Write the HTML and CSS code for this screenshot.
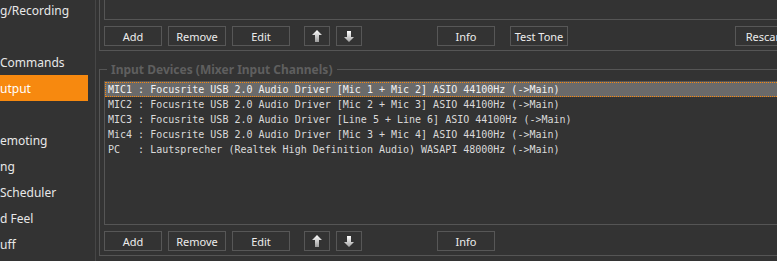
FILE: index.html
```html
<!DOCTYPE html>
<html>
<head>
  <meta charset="utf-8">
  <title>Options</title>
  <link rel="stylesheet" href="styles.css">
</head>
<body>
<div class="app">

  <!-- 왼쪽 메뉴 -->
  <div class="sidebar">
    <div class="nav">
      <div class="nav-item">g/Recording</div>
      <div class="nav-item"></div>
      <div class="nav-item">Commands</div>
      <div class="nav-item active">utput</div>
      <div class="nav-item"></div>
      <div class="nav-item">emoting</div>
      <div class="nav-item">ng</div>
      <div class="nav-item">Scheduler</div>
      <div class="nav-item">d Feel</div>
      <div class="nav-item">uff</div>
    </div>
  </div>

  <!-- 설정 패널 -->
  <div class="main">
    <div class="group group-top">
      <div class="listbox listbox-top"></div>
      <div class="btn-row">
        <div class="btn">Add</div>
        <div class="btn">Remove</div>
        <div class="btn">Edit</div>
        <div class="btn btn-arrow gap-up">
          <svg width="10" height="12" viewBox="0 0 10 12"><defs><linearGradient id="ga1" x1="0" y1="0" x2="0" y2="1"><stop offset="0" stop-color="#ffffff"/><stop offset="1" stop-color="#9c9c9c"/></linearGradient></defs><path d="M5 0 L10 5 L7 5 L7 12 L3 12 L3 5 L0 5 Z" fill="url(#ga1)"/></svg>
        </div>
        <div class="btn btn-arrow">
          <svg width="10" height="11" viewBox="0 0 10 11"><defs><linearGradient id="gb1" x1="0" y1="0" x2="0" y2="1"><stop offset="0" stop-color="#ffffff"/><stop offset="1" stop-color="#a4a4a4"/></linearGradient></defs><path d="M3 0 L7 0 L7 6 L10 6 L5 11 L0 6 L3 6 Z" fill="url(#gb1)"/></svg>
        </div>
        <div class="btn gap-info">Info</div>
        <div class="btn gap-tone">Test Tone</div>
        <div class="btn gap-rescan">Rescan</div>
      </div>
    </div>

    <div class="group-head"><span>Input Devices (Mixer Input Channels)</span></div>
    <div class="group group-input">
      <div class="listbox listbox-input">
        <div class="row selected">MIC1 : Focusrite USB 2.0 Audio Driver [Mic 1 + Mic 2] ASIO 44100Hz (-&gt;Main)</div>
        <div class="row">MIC2 : Focusrite USB 2.0 Audio Driver [Mic 2 + Mic 3] ASIO 44100Hz (-&gt;Main)</div>
        <div class="row">MIC3 : Focusrite USB 2.0 Audio Driver [Line 5 + Line 6] ASIO 44100Hz (-&gt;Main)</div>
        <div class="row">Mic4 : Focusrite USB 2.0 Audio Driver [Mic 3 + Mic 4] ASIO 44100Hz (-&gt;Main)</div>
        <div class="row">PC   : Lautsprecher (Realtek High Definition Audio) WASAPI 48000Hz (-&gt;Main)</div>
      </div>
      <div class="btn-row">
        <div class="btn">Add</div>
        <div class="btn">Remove</div>
        <div class="btn">Edit</div>
        <div class="btn btn-arrow gap-up">
          <svg width="10" height="12" viewBox="0 0 10 12"><defs><linearGradient id="ga2" x1="0" y1="0" x2="0" y2="1"><stop offset="0" stop-color="#ffffff"/><stop offset="1" stop-color="#9c9c9c"/></linearGradient></defs><path d="M5 0 L10 5 L7 5 L7 12 L3 12 L3 5 L0 5 Z" fill="url(#ga2)"/></svg>
        </div>
        <div class="btn btn-arrow">
          <svg width="10" height="11" viewBox="0 0 10 11"><defs><linearGradient id="gb2" x1="0" y1="0" x2="0" y2="1"><stop offset="0" stop-color="#ffffff"/><stop offset="1" stop-color="#a4a4a4"/></linearGradient></defs><path d="M3 0 L7 0 L7 6 L10 6 L5 11 L0 6 L3 6 Z" fill="url(#gb2)"/></svg>
        </div>
        <div class="btn gap-info">Info</div>
      </div>
    </div>
  </div>

</div>
</body>
</html>
```

FILE: styles.css
```css
/* 기본 */
body { margin: 0; background: #333333; overflow: hidden; font-family: "Noto Sans", "Liberation Sans", sans-serif; font-size: 11px; color: #e6e6e6; }
.app { display: flex; height: 261px; width: 1000px; }

/* 왼쪽 메뉴 */
.sidebar { flex: none; width: 95px; border-right: 1px solid #464646; overflow: hidden; }
.nav { margin-top: -3px; }
.nav-item { width: 88px; height: 26px; line-height: 28px; font-size: 12px; white-space: nowrap; overflow: hidden; color: #e8e8e8; }
.nav-item.active { background: #f7890f; color: #ffffff; }

/* 설정 패널 */
.main { flex: none; width: 860px; padding-left: 3px; }
.group { border-left: 1px solid #555555; border-bottom: 1px solid #555555; padding: 0 0 4px 4px; }
.group-input { padding-top: 4px; }

.group-head { display: flex; height: 15px; margin-top: 11px; }
.group-head::before { content: ""; align-self: flex-end; box-sizing: border-box; width: 8px; height: 8px; border-top: 1px solid #555555; border-left: 1px solid #555555; }
.group-head::after { content: ""; flex: 1; align-self: center; height: 1px; background: #555555; }
.group-head span { padding: 0 5px 0 4px; line-height: 15px; font-size: 12px; font-weight: bold; color: #5f5f5f; white-space: nowrap; }

/* 리스트 */
.listbox { box-sizing: border-box; border: 1px solid #555555; border-right: none; }
.listbox-top { height: 20px; border-top: none; }
.listbox-input { height: 144px; font-family: "DejaVu Sans Mono", "Liberation Mono", monospace; font-size: 10px; color: #dadada; }
.row { height: 15px; line-height: 15px; padding-left: 3px; white-space: pre; }
.row.selected { background: #6a6a6a; color: #f2f2f2; outline: 1px dotted #f7890f; outline-offset: -1px; }

/* 버튼 */
.btn-row { display: flex; margin-top: 6px; height: 20px; }
.btn { flex: none; box-sizing: border-box; width: 58px; height: 20px; margin-right: 6px; border: 1px solid #575757; display: flex; align-items: center; justify-content: center; color: #ececec; white-space: nowrap; }
.btn-arrow { width: 26px; }
.gap-up { margin-left: 8px; }
.gap-info { margin-left: 69px; }
.gap-tone { margin-left: 9px; }
.gap-rescan { margin-left: 161px; }
```
